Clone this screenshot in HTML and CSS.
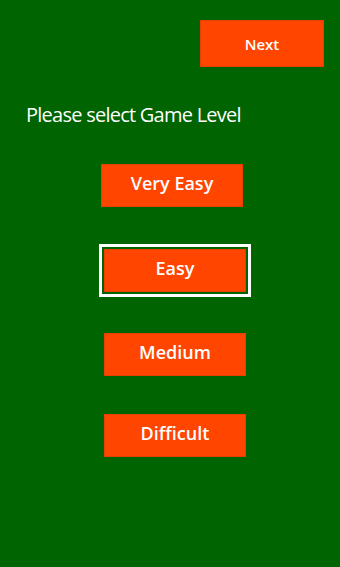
FILE: index.html
```html
<!DOCTYPE html>
<html>
<head>
<meta charset="utf-8">
<link rel="stylesheet" href="styles.css">
</head>
<body>
<div class="screen">
  <div class="top">
    <div class="btn next">Next</div>
  </div>
  <div class="prompt">Please select Game Level</div>
  <div class="levels">
    <div class="btn level very-easy">Very Easy</div>
    <div class="focus"><div class="btn level">Easy</div></div>
    <div class="btn level medium">Medium</div>
    <div class="btn level difficult">Difficult</div>
  </div>
</div>
</body>
</html>
```
FILE: styles.css
```css
html, body {
  margin: 0;
  padding: 0;
  background: #006400;
}
.screen {
  width: 340px;
  height: 567px;
  background: #006400;
  font-family: "Open Sans", "Noto Sans", sans-serif;
  color: #ffffff;
  display: flex;
  flex-direction: column;
}
.top {
  display: flex;
  justify-content: flex-end;
  padding: 20px 16px 0 0;
}
.btn {
  background: #ff4500;
  border: 1px solid #e84000;
  box-sizing: border-box;
  display: flex;
  align-items: center;
  justify-content: center;
  color: #ffffff;
  font-weight: 600;
}
.next {
  width: 124px;
  height: 47px;
  font-size: 15px;
}
.prompt {
  margin: 35px 0 0 26px;
  font-size: 20px;
  line-height: 26px;
  letter-spacing: -0.75px;
}
.levels {
  display: flex;
  flex-direction: column;
  align-items: flex-start;
}
.level {
  width: 142px;
  height: 43px;
  font-size: 18px;
  padding-bottom: 6px;
}
.very-easy {
  margin: 36px 0 0 101px;
}
.focus {
  margin: 37px 0 0 99px;
  border: 3px solid #ffffff;
  padding: 2px;
}
.medium {
  margin: 36px 0 0 104px;
}
.difficult {
  margin: 38px 0 0 104px;
}
```
